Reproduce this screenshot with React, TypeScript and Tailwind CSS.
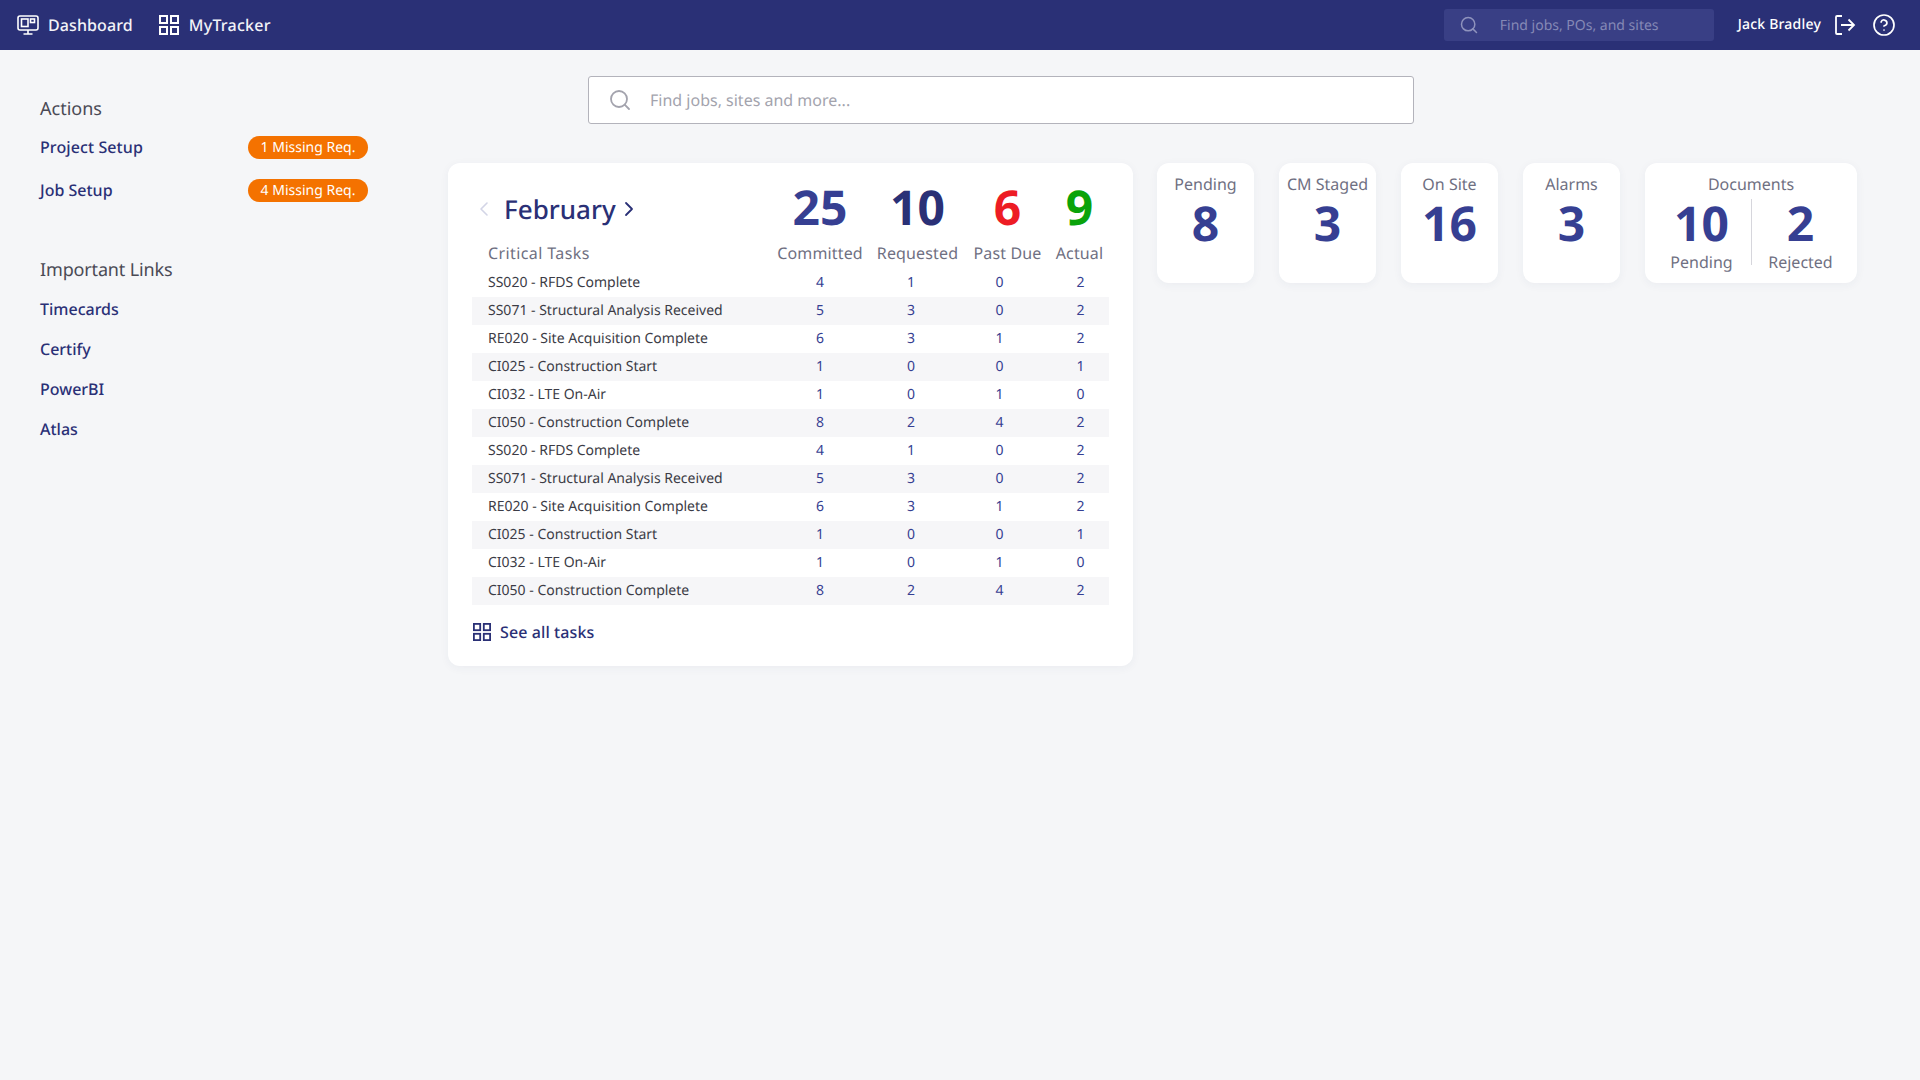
import React from 'react';
import { ChevronLeft, ChevronRight, CircleHelp, Search } from 'lucide-react';

const FONT = "font-['Noto_Sans',sans-serif] [text-rendering:geometricPrecision]";

const tasks: [string, number, number, number, number][] = [
  ['SS020 - RFDS Complete', 4, 1, 0, 2],
  ['SS071 - Structural Analysis Received', 5, 3, 0, 2],
  ['RE020 - Site Acquisition Complete', 6, 3, 1, 2],
  ['CI025 - Construction Start', 1, 0, 0, 1],
  ['CI032 - LTE On-Air', 1, 0, 1, 0],
  ['CI050 - Construction Complete', 8, 2, 4, 2],
  ['SS020 - RFDS Complete', 4, 1, 0, 2],
  ['SS071 - Structural Analysis Received', 5, 3, 0, 2],
  ['RE020 - Site Acquisition Complete', 6, 3, 1, 2],
  ['CI025 - Construction Start', 1, 0, 0, 1],
  ['CI032 - LTE On-Air', 1, 0, 1, 0],
  ['CI050 - Construction Complete', 8, 2, 4, 2],
];

const GridIcon = ({ className }: { className?: string }) => (
  <svg viewBox="0 0 20 20" fill="none" stroke="currentColor" strokeWidth="2" className={className}>
    <rect x="1" y="1" width="7" height="7" />
    <rect x="12" y="1" width="7" height="7" />
    <rect x="1" y="12" width="7" height="7" />
    <rect x="12" y="12" width="7" height="7" />
  </svg>
);

const MonitorIcon = () => (
  <svg viewBox="0 0 22 20" fill="none" stroke="currentColor" strokeWidth="1.6" className="w-[22px] h-5">
    <rect x="1" y="1" width="20" height="14" rx="2" />
    <rect x="4.5" y="4" width="6.5" height="7.5" />
    <rect x="13.5" y="4" width="4" height="3.5" />
    <path d="M11 15v4M6.5 19h9" />
  </svg>
);

const LogoutIcon = () => (
  <svg viewBox="0 0 22 22" fill="none" stroke="currentColor" strokeWidth="1.8" className="w-[22px] h-[22px]">
    <path d="M8 2H3a1 1 0 0 0-1 1v16a1 1 0 0 0 1 1h5" />
    <path d="M7 11h13M14.500 5.500 20 11l-5.500 5.500" />
  </svg>
);

const StatCard = ({ title, value, width }: { title: string; value: number; width: string }) => (
  <div className={`${width} h-[120px] bg-white rounded-xl shadow-[0_2px_10px_rgba(40,50,90,0.05)] flex flex-col items-center pt-[10px]`}>
    <div className="text-base leading-[22px] text-[#6f7082]">{title}</div>
    <div className="text-[48px] leading-[56px] font-bold text-[#363f92] mt-[1px]">{value}</div>
  </div>
);

export default function App() {
  return (
    <div className={`${FONT} min-h-[1080px] bg-[#f5f6f8]`}>
      <header className="h-[50px] bg-[#2a3076] flex items-center text-white">
        <div className="flex items-center ml-[17px] gap-[9px]">
          <MonitorIcon />
          <span className="text-base font-medium text-[#f2f3f8] tracking-[0.1px]">Dashboard</span>
        </div>
        <div className="flex items-center ml-[26px] gap-[10px]">
          <GridIcon className="w-5 h-5" />
          <span className="text-base font-medium text-[#f2f3f8] tracking-[0.25px]">MyTracker</span>
        </div>
        <div className="ml-auto w-[270px] h-[32px] rounded-[3px] bg-[#393f85] flex items-center">
          <Search className="w-5 h-5 ml-[15px] text-[#8f93bd]" strokeWidth={1.8} />
          <span className="ml-[21px] text-sm leading-[20px] pt-[1px] text-[#8589b6]">Find jobs, POs, and sites</span>
        </div>
        <span className="ml-6 text-sm font-medium tracking-[0.2px]">Jack Bradley</span>
        <div className="ml-[13px]"><LogoutIcon /></div>
        <CircleHelp className="w-[24px] h-[24px] ml-[16px] mr-[24px]" strokeWidth={1.7} />
      </header>

      <div className="flex">
        <aside className="w-[448px] pl-10 shrink-0">
          <div className="mt-[46px] text-lg leading-[26px] text-[#4a4a55]">Actions</div>
          <div className="mt-[13px] flex items-center h-6 w-[328px] justify-between">
            <span className="text-base font-medium text-[#2a3076] tracking-[0.1px]">Project Setup</span>
            <span className="w-[120px] h-[23px] rounded-full bg-[#f47200] text-white text-sm text-center leading-[23px]">1 Missing Req.</span>
          </div>
          <div className="mt-[19px] flex items-center h-6 w-[328px] justify-between">
            <span className="text-base font-medium text-[#2a3076]">Job Setup</span>
            <span className="w-[120px] h-[23px] rounded-full bg-[#f47200] text-white text-sm text-center leading-[23px]">4 Missing Req.</span>
          </div>
          <div className="mt-[55px] text-lg leading-[26px] text-[#4a4a55] tracking-[-0.15px]">Important Links</div>
          <div className="mt-[14px] flex flex-col gap-4">
            {['Timecards', 'Certify', 'PowerBI', 'Atlas'].map((l) => (
              <div key={l} className="text-base leading-6 font-medium text-[#2a3076]">{l}</div>
            ))}
          </div>
        </aside>

        <main className="flex-1">
          <div className="mt-[26px] ml-[140px] w-[826px] h-[48px] bg-white border border-[#b3b3bb] rounded-[3px] flex items-center">
            <Search className="w-6 h-6 ml-[19px] text-[#a3a3ad]" strokeWidth={1.8} />
            <span className="ml-[18px] text-base text-[#a3a3ad]">Find jobs, sites and more...</span>
          </div>

          <div className="mt-[39px] flex items-start">
            <section className="w-[685px] h-[503px] bg-white rounded-xl shadow-[0_2px_10px_rgba(40,50,90,0.05)] pt-[21px] px-6">
              <div className="flex items-center h-12">
                <div className="w-[293px] flex items-center pt-[2px]">
                  <ChevronLeft className="w-6 h-6 text-[#d3d5e6]" strokeWidth={1.6} />
                  <span className="ml-[8px] text-[26px] leading-9 font-medium text-[#2a3076]">February</span>
                  <ChevronRight className="w-6 h-6 ml-[1px] text-[#2a3076]" strokeWidth={1.8} />
                </div>
                <div className="flex text-[48px] leading-[48px] font-bold text-center">
                  <span className="w-[110px] text-[#363f92]">25</span>
                  <span className="w-[85px] text-[#2a3076]">10</span>
                  <span className="w-[95px] text-[#ed1c24]">6</span>
                  <span className="w-[49px] text-[#0aa30a]">9</span>
                </div>
              </div>
              <div className="mt-[9px] flex h-[24px] items-center text-base text-[#6f7082] tracking-[0.15px]">
                <div className="w-[293px] pl-4 tracking-[0.4px]">Critical Tasks</div>
                <div className="w-[110px] text-center whitespace-nowrap">Committed</div>
                <div className="w-[85px] text-center whitespace-nowrap">Requested</div>
                <div className="w-[95px] text-center whitespace-nowrap">Past Due</div>
                <div className="w-[49px] text-center">Actual</div>
              </div>
              <div className="mt-[4px]">
                {tasks.map(([name, a, b, c, d], i) => (
                  <div key={i} className={`flex items-center h-7 text-sm ${i % 2 === 1 ? 'bg-[#f6f6f8]' : ''}`}>
                    <div className="w-[293px] pl-4 text-[#3c3c46]">{name}</div>
                    <div className="w-[110px] text-center text-[#363f92]">{a}</div>
                    <div className="w-[72px] text-center text-[#363f92]">{b}</div>
                    <div className="w-[105px] text-center text-[#363f92]">{c}</div>
                    <div className="w-[57px] text-center text-[#363f92]">{d}</div>
                  </div>
                ))}
              </div>
              <div className="mt-[15px] flex items-center text-[#2a3076]">
                <GridIcon className="w-[18px] h-[18px] ml-[1px]" />
                <span className="ml-[9px] text-base font-medium leading-6 tracking-[0.1px]">See all tasks</span>
              </div>
            </section>

            <div className="ml-6 flex items-start gap-[25px]">
              <StatCard title="Pending" value={8} width="w-[97px]" />
              <StatCard title="CM Staged" value={3} width="w-[97px]" />
              <StatCard title="On Site" value={16} width="w-[97px]" />
              <StatCard title="Alarms" value={3} width="w-[97px]" />
              <div className="w-[212px] h-[120px] bg-white rounded-xl shadow-[0_2px_10px_rgba(40,50,90,0.05)] pt-[10px] flex flex-col items-center">
                <div className="text-base leading-[22px] text-[#6f7082]">Documents</div>
                <div className="flex justify-center w-full mt-[1px]">
                  <div className="w-[98px] flex flex-col items-center">
                    <div className="text-[48px] leading-[56px] font-bold text-[#363f92]">10</div>
                    <div className="text-base leading-[20px] text-[#6f7082]">Pending</div>
                  </div>
                  <div className="w-px h-[66px] bg-[#d6d6dc] mt-[3px]" />
                  <div className="w-[98px] flex flex-col items-center">
                    <div className="text-[48px] leading-[56px] font-bold text-[#363f92]">2</div>
                    <div className="text-base leading-[20px] text-[#6f7082]">Rejected</div>
                  </div>
                </div>
              </div>
            </div>
          </div>
        </main>
      </div>
    </div>
  );
}
